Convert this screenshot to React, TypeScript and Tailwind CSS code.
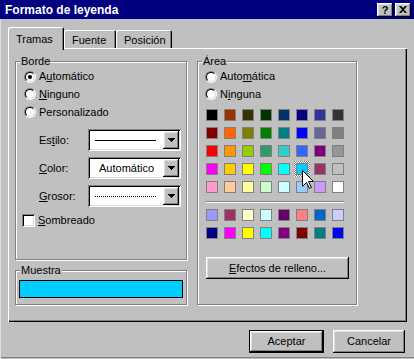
import React from "react";

const RAISED =
  "bg-[#c0c0c0] shadow-[inset_-1px_-1px_#000,inset_1px_1px_#fff,inset_-2px_-2px_#808080,inset_2px_2px_#dfdfdf]";
const SUNKEN =
  "bg-white shadow-[inset_1px_1px_#808080,inset_-1px_-1px_#fff,inset_2px_2px_#000,inset_-2px_-2px_#dfdfdf]";
const ETCHED = "border border-[#808080] shadow-[inset_1px_1px_#fff,1px_1px_#fff]";

const ROWS_TOP: string[][] = [
  ["bg-[#000000]", "bg-[#993300]", "bg-[#333300]", "bg-[#003300]", "bg-[#003366]", "bg-[#000080]", "bg-[#333399]", "bg-[#333333]"],
  ["bg-[#800000]", "bg-[#ff6600]", "bg-[#808000]", "bg-[#008000]", "bg-[#008080]", "bg-[#0000ff]", "bg-[#666699]", "bg-[#808080]"],
  ["bg-[#ff0000]", "bg-[#ff9900]", "bg-[#99cc00]", "bg-[#339966]", "bg-[#33cccc]", "bg-[#3366ff]", "bg-[#800080]", "bg-[#969696]"],
  ["bg-[#ff00ff]", "bg-[#ffcc00]", "bg-[#ffff00]", "bg-[#00ff00]", "bg-[#00ffff]", "bg-[#00ccff]", "bg-[#993366]", "bg-[#c0c0c0]"],
  ["bg-[#ff99cc]", "bg-[#ffcc99]", "bg-[#ffff99]", "bg-[#ccffcc]", "bg-[#ccffff]", "bg-[#99ccff]", "bg-[#cc99ff]", "bg-[#ffffff]"],
];
const ROWS_BOTTOM: string[][] = [
  ["bg-[#9999ff]", "bg-[#993366]", "bg-[#ffffcc]", "bg-[#ccffff]", "bg-[#660066]", "bg-[#ff8080]", "bg-[#0066cc]", "bg-[#ccccff]"],
  ["bg-[#000080]", "bg-[#ff00ff]", "bg-[#ffff00]", "bg-[#00ffff]", "bg-[#800080]", "bg-[#800000]", "bg-[#008080]", "bg-[#0000ff]"],
];

function Radio({ checked }: { checked?: boolean }) {
  return (
    <span className="block w-[12px] h-[12px] rounded-full border border-t-[#808080] border-l-[#808080] border-r-white border-b-white shrink-0">
      <span className="flex items-center justify-center w-full h-full rounded-full border border-t-black border-l-black border-r-[#dfdfdf] border-b-[#dfdfdf] bg-white">
        {checked && <span className="block w-[4px] h-[4px] rounded-full bg-black" />}
      </span>
    </span>
  );
}

function Arrow() {
  return (
    <svg width="7" height="4" viewBox="0 0 7 4" className="block">
      <path d="M0 0h7v1H0zM1 1h5v1H1zM2 2h3v1H2zM3 3h1v1H3z" fill="#000" />
    </svg>
  );
}

function Combo({ children }: { children: React.ReactNode }) {
  return (
    <div className={`w-[93px] h-[22px] ${SUNKEN} flex items-stretch p-[2px]`}>
      <div className="flex-1 flex items-center">{children}</div>
      <div className={`w-[16px] ${RAISED} flex items-center justify-center`}>
        <Arrow />
      </div>
    </div>
  );
}

function Swatch({ cls }: { cls: string }) {
  return <div className={`w-[12px] h-[12px] border border-[#808080] ${cls}`} />;
}

function SwatchGrid({ rows, selected }: { rows: string[][]; selected?: [number, number] }) {
  return (
    <div className="grid grid-cols-[repeat(8,12px)] gap-[6px]">
      {rows.map((row, r) =>
        row.map((c, i) =>
          selected && selected[0] === r && selected[1] === i ? (
            <div key={`${r}-${i}`} className="relative w-[12px] h-[12px]">
              <div className="absolute -inset-[2px] bg-[repeating-conic-gradient(#ffffff_0_25%,#808080_0_50%)] bg-[length:2px_2px]" />
              <div className="relative">
                <Swatch cls={c} />
              </div>
            </div>
          ) : (
            <Swatch key={`${r}-${i}`} cls={c} />
          )
        )
      )}
    </div>
  );
}

export default function App() {
  return (
    <div className="relative w-[414px] h-[359px] overflow-hidden bg-[#c0c0c0] text-black text-[11px] leading-[13px] font-['Liberation_Sans',Arial,sans-serif]">
      {/* Title bar */}
      <div className="h-[19px] bg-[#000080] flex items-center pl-[5px] pr-[3px]">
        <span className="flex-1 text-white font-bold text-[12px] leading-[14px]">Formato de leyenda</span>
        <div className="flex gap-[2px]">
          <div className={`w-[16px] h-[14px] ${RAISED} flex items-center justify-center font-bold text-[11px] leading-[11px] pt-[1px]`}>?</div>
          <div className={`w-[16px] h-[14px] ${RAISED} flex items-center justify-center`}>
            <svg width="8" height="7" viewBox="0 0 8 7" className="block">
              <path d="M0 0h2l2 2 2-2h2L5 3.5 8 7H6L4 5 2 7H0l3-3.5z" fill="#000" />
            </svg>
          </div>
        </div>
      </div>

      {/* Body */}
      <div className="h-[340px] pl-[8px] pt-[8px] shadow-[inset_1px_0_#dfdfdf,inset_0_-1px_#c0c0c0,inset_0_-2px_#808080]">
        {/* Tabs */}
        <div className="flex items-end h-[21px]">
          <div className="relative z-10 w-[56px] h-[23px] -mb-[2px] bg-[#c0c0c0] rounded-tl-[2px] rounded-tr-[2px] shadow-[inset_1px_1px_#fff,inset_-1px_0_#000,inset_-2px_0_#808080] flex items-start pl-[8px] pt-[6px]">
            Tramas
          </div>
          <div className="w-[52px] h-[18px] bg-[#c0c0c0] rounded-tl-[2px] rounded-tr-[2px] shadow-[inset_1px_1px_#fff,inset_-1px_0_#000,inset_-2px_0_#808080] flex items-start pl-[8px] pt-[4px]">
            Fuente
          </div>
          <div className="w-[56px] h-[18px] bg-[#c0c0c0] rounded-tl-[2px] rounded-tr-[2px] shadow-[inset_1px_1px_#fff,inset_-1px_0_#000,inset_-2px_0_#808080] flex items-start pl-[8px] pt-[4px]">
            Posición
          </div>
        </div>

        {/* Panel */}
        <div className="w-[399px] h-[274px] shadow-[inset_1px_1px_#fff,inset_-1px_-1px_#000,inset_-2px_-2px_#808080] pl-[7px] pt-[13px] flex gap-[10px]">
          {/* Left column */}
          <div className="flex flex-col w-[172px]">
            <div className={`relative h-[199px] ${ETCHED}`}>
              <span className="absolute left-[4px] -top-[7px] px-[1px] bg-[#c0c0c0]">Borde</span>
              <div className="pt-[6px] pl-[8px] flex flex-col">
                <div className="h-[17px] flex items-center gap-[3px]">
                  <Radio checked />
                  <span>
                    A<u>u</u>tomático
                  </span>
                </div>
                <div className="h-[18px] flex items-center gap-[3px]">
                  <Radio />
                  <span>
                    <u>N</u>inguno
                  </span>
                </div>
                <div className="h-[18px] flex items-center gap-[3px]">
                  <Radio />
                  <span>Personalizado</span>
                </div>
              </div>
              <div className="mt-[8px] pl-[23px] flex flex-col gap-[6px]">
                <div className="flex items-center h-[22px]">
                  <span className="w-[49px]">
                    Es<u>t</u>ilo:
                  </span>
                  <Combo>
                    <div className="ml-[5px] w-[61px] h-[1px] bg-black" />
                  </Combo>
                </div>
                <div className="flex items-center h-[22px]">
                  <span className="w-[49px]">
                    <u>C</u>olor:
                  </span>
                  <Combo>
                    <span className="pl-[9px]">Automático</span>
                  </Combo>
                </div>
                <div className="flex items-center h-[22px]">
                  <span className="w-[49px]">
                    <u>G</u>rosor:
                  </span>
                  <Combo>
                    <div className="ml-[5px] w-[61px] h-[1px] bg-[repeating-linear-gradient(90deg,#000_0_1px,transparent_1px_2px)]" />
                  </Combo>
                </div>
              </div>
              <div className="mt-[7px] pl-[6px] flex items-center gap-[3px]">
                <div className={`w-[13px] h-[13px] ${SUNKEN}`} />
                <span>
                  <u>S</u>ombreado
                </span>
              </div>
            </div>

            <div className={`relative mt-[10px] h-[35px] ${ETCHED} pl-[3px] pt-[9px]`}>
              <span className="absolute left-[4px] -top-[7px] px-[1px] bg-[#c0c0c0]">Muestra</span>
              <div className="w-[164px] h-[18px] border border-black bg-[#00ccff]" />
            </div>
          </div>

          {/* Area */}
          <div className={`relative w-[160px] h-[244px] ${ETCHED} pl-[7px]`}>
            <span className="absolute left-[4px] -top-[7px] px-[1px] bg-[#c0c0c0]">Área</span>
            <div className="pt-[6px] flex flex-col">
              <div className="h-[17px] flex items-center gap-[3px]">
                <Radio />
                <span>
                  Auto<u>m</u>ática
                </span>
              </div>
              <div className="h-[18px] flex items-center gap-[3px]">
                <Radio />
                <span>
                  N<u>i</u>nguna
                </span>
              </div>
            </div>
            <div className="ml-[1px] mt-[6px]">
              <SwatchGrid rows={ROWS_TOP} selected={[3, 5]} />
              <div className="mt-[8px] w-[138px] h-[1px] bg-[#808080] shadow-[0_1px_#fff]" />
              <div className="mt-[7px]">
                <SwatchGrid rows={ROWS_BOTTOM} />
              </div>
              <div className={`mt-[18px] w-[143px] h-[22px] ${RAISED} flex items-center justify-center`}>
                <span>
                  <u>E</u>fectos de relleno...
                </span>
              </div>
            </div>
          </div>
        </div>

        {/* Buttons */}
        <div className="mt-[8px] w-[399px] pr-[2px] flex justify-end gap-[9px]">
          <div className="w-[75px] h-[23px] border border-black">
            <div className={`w-full h-full ${RAISED} flex items-center justify-center`}>Aceptar</div>
          </div>
          <div className={`w-[72px] h-[23px] ${RAISED} flex items-center justify-center`}>Cancelar</div>
        </div>
      </div>

      {/* Mouse cursor */}
      <svg width="13" height="20" viewBox="0 0 13 20" className="absolute left-[302px] top-[170px]">
        <path d="M0.5 0.5V16.5L4.5 12.5L7.5 18.5L9.5 17.5L6.5 11.5H11.5Z" fill="#fff" stroke="#000" strokeWidth="1" />
      </svg>
    </div>
  );
}
